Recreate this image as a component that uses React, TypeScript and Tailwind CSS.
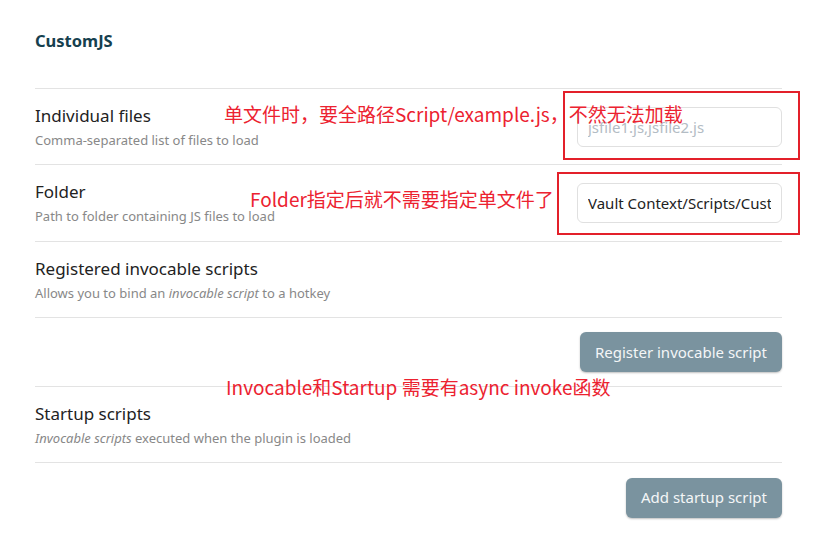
import React from 'react';

const ui = { fontFamily: '"Noto Sans", "Open Sans", sans-serif' };
const note = { fontFamily: '"Noto Sans CJK SC", "Noto Sans", sans-serif' };

function SettingItem({
  name,
  desc,
  h = 'h-[76px]',
  children,
}: {
  name: string;
  desc: React.ReactNode;
  h?: string;
  children?: React.ReactNode;
}) {
  return (
    <div className={`flex items-center justify-between border-t border-[#e3e3e3] ${h}`}>
      <div className="flex flex-col">
        <div className="text-[17px] leading-[22px] text-[#222]">{name}</div>
        <div className="text-[13px] leading-[18px] text-[#888] mt-[4px]">{desc}</div>
      </div>
      {children}
    </div>
  );
}

function ButtonRow({ label, h }: { label: string; h: string }) {
  return (
    <div className={`flex items-center justify-end border-t border-[#e3e3e3] ${h}`}>
      <button className="h-[40px] px-[15px] rounded-[6px] bg-[#7a939f] text-[#f4f6f7] text-[15px] shadow-[0_1px_2px_rgba(0,0,0,0.25)]">
        {label}
      </button>
    </div>
  );
}

export default function App() {
  return (
    <div className="relative w-[830px] h-[542px] bg-white overflow-hidden" style={ui}>
      <div className="pl-[35px] w-[782px]">
        <div className="h-[88px] pt-[30px]">
          <h2 className="text-[16.5px] leading-[22px] font-bold text-[#16404e]">CustomJS</h2>
        </div>

        <SettingItem name="Individual files" desc="Comma-separated list of files to load">
          <input
            placeholder="jsfile1.js,jsfile2.js"
            className="w-[205px] h-[40px] px-[10px] rounded-[6px] border border-[#e0e0e0] text-[15px] text-[#222] placeholder:text-[#b3bcc4] outline-none"
          />
        </SettingItem>

        <SettingItem name="Folder" desc="Path to folder containing JS files to load" h="h-[77px]">
          <input
            defaultValue="Vault Context/Scripts/CustomJS"
            className="w-[205px] h-[40px] px-[10px] rounded-[6px] border border-[#e0e0e0] text-[15px] text-[#222] outline-none"
          />
        </SettingItem>

        <SettingItem
          name="Registered invocable scripts"
          desc={
            <>
              Allows you to bind an <i>invocable script</i> to a hotkey
            </>
          }
        />
        <ButtonRow label="Register invocable script" h="h-[69px]" />

        <SettingItem
          name="Startup scripts"
          desc={
            <>
              <i>Invocable scripts</i> executed when the plugin is loaded
            </>
          }
        />
        <ButtonRow label="Add startup script" h="h-[70px]" />
      </div>

      {/* annotations */}
      <div className="absolute left-[563px] top-[91px] w-[237px] h-[69px] border-2 border-[#e3202a]" />
      <div className="absolute left-[557px] top-[172px] w-[243px] h-[63px] border-2 border-[#e3202a]" />
      <div className="absolute left-[224px] top-[102px] text-[19px] leading-[24px] text-[#ec2230] whitespace-nowrap" style={note}>
        单文件时，要全路径Script/example.js，不然无法加载
      </div>
      <div className="absolute left-[250px] top-[187px] text-[19px] leading-[24px] text-[#ec2230] whitespace-nowrap" style={note}>
        Folder指定后就不需要指定单文件了
      </div>
      <div className="absolute left-[226px] top-[375px] text-[19px] leading-[24px] text-[#ec2230] whitespace-nowrap" style={note}>
        Invocable和Startup 需要有async invoke函数
      </div>
    </div>
  );
}
